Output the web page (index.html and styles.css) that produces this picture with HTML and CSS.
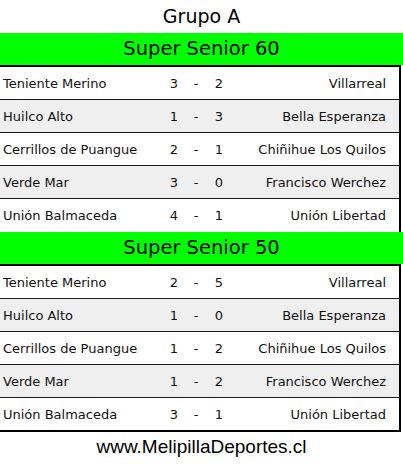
FILE: index.html
```html
<!DOCTYPE html>
<html lang="es">
<head>
<meta charset="utf-8">
<title>Grupo A</title>
<link rel="stylesheet" href="styles.css">
</head>
<body>
<div class="page">
  <h1 class="title">Grupo A</h1>

  <h2 class="category">Super Senior 60</h2>
  <div class="table">
    <div class="row"><span class="home">Teniente Merino</span><span class="score">3</span><span class="dash">-</span><span class="score">2</span><span class="away">Villarreal</span></div>
    <div class="row"><span class="home">Huilco Alto</span><span class="score">1</span><span class="dash">-</span><span class="score">3</span><span class="away">Bella Esperanza</span></div>
    <div class="row"><span class="home">Cerrillos de Puangue</span><span class="score">2</span><span class="dash">-</span><span class="score">1</span><span class="away">Chiñihue Los Quilos</span></div>
    <div class="row"><span class="home">Verde Mar</span><span class="score">3</span><span class="dash">-</span><span class="score">0</span><span class="away">Francisco Werchez</span></div>
    <div class="row"><span class="home">Unión Balmaceda</span><span class="score">4</span><span class="dash">-</span><span class="score">1</span><span class="away">Unión Libertad</span></div>
  </div>

  <h2 class="category">Super Senior 50</h2>
  <div class="table table-last">
    <div class="row"><span class="home">Teniente Merino</span><span class="score">2</span><span class="dash">-</span><span class="score">5</span><span class="away">Villarreal</span></div>
    <div class="row"><span class="home">Huilco Alto</span><span class="score">1</span><span class="dash">-</span><span class="score">0</span><span class="away">Bella Esperanza</span></div>
    <div class="row"><span class="home">Cerrillos de Puangue</span><span class="score">1</span><span class="dash">-</span><span class="score">2</span><span class="away">Chiñihue Los Quilos</span></div>
    <div class="row"><span class="home">Verde Mar</span><span class="score">1</span><span class="dash">-</span><span class="score">2</span><span class="away">Francisco Werchez</span></div>
    <div class="row"><span class="home">Unión Balmaceda</span><span class="score">3</span><span class="dash">-</span><span class="score">1</span><span class="away">Unión Libertad</span></div>
  </div>

  <p class="footer">www.MelipillaDeportes.cl</p>
</div>
</body>
</html>
```

FILE: styles.css
```css
html, body {
  margin: 0;
  padding: 0;
  background: #ffffff;
}

.page {
  width: 403px;
  font-family: "DejaVu Sans", Verdana, sans-serif;
  color: #111111;
}

.title {
  margin: 0;
  height: 33px;
  line-height: 33px;
  font-size: 19px;
  font-weight: normal;
  text-align: center;
  color: #000000;
}

.category {
  margin: 0;
  height: 32px;
  line-height: 32px;
  background: #00ff00;
  font-size: 19.5px;
  font-weight: normal;
  text-align: center;
  color: #000000;
}

.table {
  width: 399px;
  border-top: 2px solid #000000;
  border-right: 2px solid #000000;
}

.row {
  display: grid;
  grid-template-columns: 162px 18px 26px 20px 1fr;
  align-items: center;
  box-sizing: border-box;
  height: 33px;
  padding: 1px 13px 0 3px;
  border-bottom: 1px solid #1a1a1a;
  font-size: 13px;
  line-height: 16px;
}

.row:nth-child(even) {
  background: #efefef;
}

.table .row:last-child {
  border-bottom: none;
}

.table-last .row:last-child {
  height: 34px;
  border-bottom: 2px solid #000000;
}

.home {
  white-space: nowrap;
}

.score,
.dash {
  text-align: center;
}

.away {
  text-align: right;
  white-space: nowrap;
}

.footer {
  margin: 0;
  height: 32px;
  line-height: 29px;
  text-align: center;
  font-family: "Liberation Sans", Arial, sans-serif;
  font-size: 19px;
  color: #000000;
}
```
